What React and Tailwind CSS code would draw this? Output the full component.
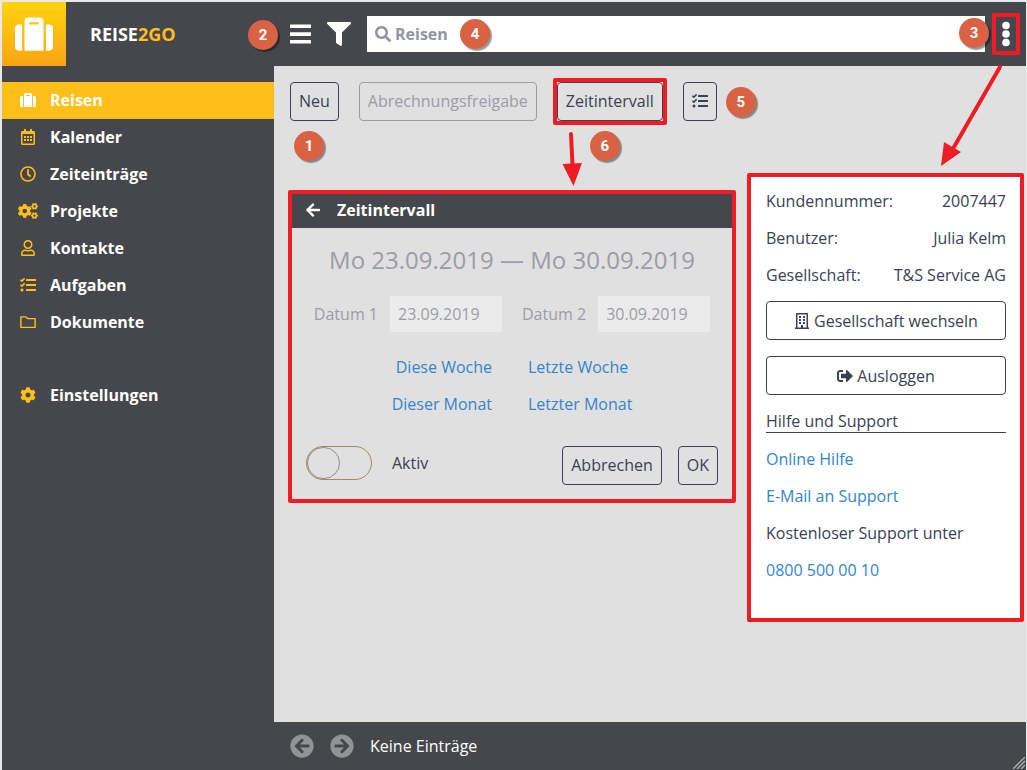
import React, { useState } from 'react';
import {
  FaArrowCircleLeft,
  FaArrowCircleRight,
  FaArrowLeft,
  FaCog,
  FaCogs,
  FaFilter,
  FaRegBuilding,
  FaRegCalendarAlt,
  FaRegClock,
  FaRegUser,
  FaSearch,
  FaSignOutAlt,
  FaSuitcase,
  FaTasks
} from 'react-icons/fa';

const FolderIcon = ({ className }) => (
  <svg viewBox="0 0 16 16" className={className} fill="none" stroke="currentColor" strokeWidth="1.4" strokeLinejoin="round">
    <path d="M.9 2.9h5l1.8 1.7h7.4v8.8H.9z" />
  </svg>
);

const navItems = [
  { label: 'Reisen', icon: FaSuitcase, active: true },
  { label: 'Kalender', icon: FaRegCalendarAlt },
  { label: 'Zeiteinträge', icon: FaRegClock },
  { label: 'Projekte', icon: FaCogs, wide: true },
  { label: 'Kontakte', icon: FaRegUser },
  { label: 'Aufgaben', icon: FaTasks },
  { label: 'Dokumente', icon: FolderIcon }
];

const account = [
  { label: 'Kundennummer:', value: '2007447' },
  { label: 'Benutzer:', value: 'Julia Kelm' },
  { label: 'Gesellschaft:', value: 'T&S Service AG' }
];

const buttonClass = 'h-[39px] px-2 border border-[#3a4252] rounded-[4px] text-[#3a4252] whitespace-nowrap';

const Badge = ({ children, className }) => (
  <span className={`absolute z-20 flex items-center justify-center w-[30px] h-[30px] rounded-full bg-[#d96245] text-white text-[15px] font-bold font-['Roboto',sans-serif] shadow-[2px_2px_1px_rgba(0,0,0,0.4)] ${className}`}>
    {children}
  </span>
);

// Red frame around a control
const Marker = () => (
  <span className="absolute -inset-1 border-4 border-[#ee1c25] rounded-[2px] pointer-events-none" />
);

const NavItem = ({ item }) => {
  const Icon = item.icon;
  return (
    <li>
      <a
        href="#"
        className={`flex items-center h-[37px] pl-4 pb-[2px] gap-3 font-bold text-white ${item.active ? 'bg-[#ffbf1b]' : ''}`}
      >
        <span className={`flex justify-center w-5 ${item.active ? 'text-white' : 'text-[#ffbf1b]'}`}>
          <Icon className={item.wide ? 'w-5 h-4' : 'w-4 h-4'} />
        </span>
        <span>{item.label}</span>
      </a>
    </li>
  );
};

const Header = () => (
  <header className="flex h-16 bg-[#46474c]">
    <div className="flex items-center w-[272px] shrink-0">
      <div className="flex items-center justify-center w-16 h-16 bg-linear-to-b from-[#ffd30d] to-[#f9a414]">
        <FaSuitcase className="w-[38px] h-[38px] text-white" />
      </div>
      <h1 className="pl-6 text-lg font-bold text-white">
        REISE<span className="text-[#ffbf1b]">2GO</span>
      </h1>
    </div>
    <div className="flex flex-1 items-center pl-4 pr-[10px]">
      <div className="relative flex">
        <Badge className="-left-[42px] -top-[2px]">2</Badge>
        <button type="button" aria-label="Menü" className="text-white">
          <svg viewBox="0 0 21 24" className="w-[21px] h-6" fill="currentColor">
            <rect x="0" y="2.500" width="21" height="3.600" rx=".6" />
            <rect x="0" y="10.300" width="21" height="3.600" rx=".6" />
            <rect x="0" y="18" width="21" height="3.600" rx=".6" />
          </svg>
        </button>
      </div>
      <button type="button" aria-label="Filter" className="ml-4 text-white">
        <FaFilter className="w-6 h-6" />
      </button>
      <div className="relative flex-1 ml-4">
        <FaSearch className="absolute left-2 top-[10px] w-4 h-4 text-[#8f96a3]" />
        <input
          type="search"
          aria-label="Suche"
          placeholder="Reisen"
          className="block w-full h-9 pl-7 pr-2 bg-white font-bold text-[#3a4252] placeholder-[#8f96a3] focus:outline-none"
        />
        <Badge className="left-[93px] top-[3px]">4</Badge>
        <Badge className="-right-1 top-[2px]">3</Badge>
      </div>
      <div className="relative ml-[11px]">
        <button type="button" aria-label="Konto" className="flex items-center justify-center w-5 h-[34px] text-white">
          <svg viewBox="0 0 8 26" className="w-2 h-[26px]" fill="currentColor">
            <circle cx="4" cy="4.5" r="3.8" />
            <circle cx="4" cy="13" r="3.8" />
            <circle cx="4" cy="21.5" r="3.8" />
          </svg>
        </button>
        <Marker />
        <svg viewBox="0 0 64 104" className="absolute z-20 -left-14 top-[46px] w-16 h-[104px] pointer-events-none">
          <path d="M60 4 14 84" stroke="#ee1c25" strokeWidth="4" strokeLinecap="round" />
          <path d="M4 79 21 89 1 103z" fill="#ee1c25" />
        </svg>
      </div>
    </div>
  </header>
);

const Sidebar = () => (
  <nav className="w-[272px] shrink-0 pt-4 bg-[#46474c]">
    <ul>
      {navItems.map(item => (
        <NavItem key={item.label} item={item} />
      ))}
    </ul>
    <ul className="mt-9">
      <NavItem item={{ label: 'Einstellungen', icon: FaCog }} />
    </ul>
  </nav>
);

const Toolbar = () => (
  <div className="flex gap-5 pl-4">
    <div className="relative flex">
      <button type="button" className={`${buttonClass} pb-[2px]`}>Neu</button>
      <Badge className="left-1 top-[49px]">1</Badge>
    </div>
    <button type="button" disabled className="h-[39px] px-2 pb-[2px] border border-[#9b9da6] rounded-[4px] text-[#9b9da6] whitespace-nowrap">
      Abrechnungsfreigabe
    </button>
    <div className="relative flex">
      <button type="button" className={`${buttonClass} pb-[2px]`}>Zeitintervall</button>
      <Marker />
      <svg viewBox="0 0 24 58" className="absolute left-1 top-[47px] w-6 h-[58px] pointer-events-none">
        <path d="M10 5 11.500 36" stroke="#ee1c25" strokeWidth="4" strokeLinecap="round" />
        <path d="M1.500 35 21 34 12.500 57z" fill="#ee1c25" />
      </svg>
      <Badge className="left-[33px] top-[49px]">6</Badge>
    </div>
    <div className="relative flex">
      <button type="button" aria-label="Auswahl" className={`${buttonClass} pb-[2px]`}>
        <FaTasks className="w-4 h-4" />
      </button>
      <Badge className="left-[43px] top-[5px]">5</Badge>
    </div>
  </div>
);

const IntervalPanel = () => {
  const [active, setActive] = useState(false);

  return (
    <section className="flex-1 mt-[17px] border-4 border-[#ee1c25] rounded-[2px]">
      <div className="flex items-center h-[34px] pl-[13px] pb-[2px] gap-4 bg-[#46474c] text-white">
        <button type="button" aria-label="Zurück">
          <FaArrowLeft className="w-4 h-4" />
        </button>
        <h2 className="font-bold">Zeitintervall</h2>
      </div>
      <form className="px-[14px] pb-[14px]" onSubmit={(e) => e.preventDefault()}>
        <p className="py-4 text-2xl leading-8 text-center text-[#9b9da6]">Mo 23.09.2019 — Mo 30.09.2019</p>
        <div className="flex justify-center gap-5 mt-1 text-[#9b9da6]">
          <div className="flex items-center gap-3">
            <label htmlFor="datum1">Datum 1</label>
            <input id="datum1" type="text" defaultValue="23.09.2019" className="w-28 h-9 px-2 bg-[#ebebeb]" />
          </div>
          <div className="flex items-center gap-3">
            <label htmlFor="datum2">Datum 2</label>
            <input id="datum2" type="text" defaultValue="30.09.2019" className="w-28 h-9 px-2 bg-[#ebebeb]" />
          </div>
        </div>
        <div className="grid grid-cols-2 gap-x-9 pr-1 mt-[17px] leading-[37px] text-[#3385cc]">
          <a href="#" className="text-right">Diese Woche</a>
          <a href="#">Letzte Woche</a>
          <a href="#" className="text-right">Dieser Monat</a>
          <a href="#">Letzter Monat</a>
        </div>
        <div className="flex items-start justify-between mt-[23px]">
          <label className="flex items-center gap-5 text-[#3a4252] cursor-pointer">
            <input
              type="checkbox"
              checked={active}
              onChange={(e) => setActive(e.target.checked)}
              className="peer sr-only"
            />
            <span className="flex w-[66px] h-[34px] border border-[#a38d55] rounded-full peer-checked:justify-end">
              <span className="w-[33px] h-8 border border-[#8f8f8f] rounded-full" />
            </span>
            <span>Aktiv</span>
          </label>
          <div className="flex gap-4">
            <button type="button" className={`${buttonClass} pb-[2px]`}>Abbrechen</button>
            <button type="submit" className={`${buttonClass} pb-[2px]`}>OK</button>
          </div>
        </div>
      </form>
    </section>
  );
};

const AccountPanel = () => (
  <aside className="w-[277px] shrink-0 pl-[15px] pr-[14px] pt-[6px] pb-[29px] bg-white border-4 border-[#ee1c25] rounded-[2px] text-[#3a4252]">
    <dl className="leading-[37px]">
      {account.map(row => (
        <div key={row.label} className="flex justify-between">
          <dt>{row.label}</dt>
          <dd>{row.value}</dd>
        </div>
      ))}
    </dl>
    <div className="flex flex-col gap-4 mt-[7px]">
      <button type="button" className={`${buttonClass} flex items-center justify-center gap-1`}>
        <FaRegBuilding className="w-4 h-4" />
        <span>Gesellschaft wechseln</span>
      </button>
      <button type="button" className={`${buttonClass} flex items-center justify-center gap-1`}>
        <FaSignOutAlt className="w-4 h-4" />
        <span>Ausloggen</span>
      </button>
    </div>
    <h3 className="mt-[15px] mb-2 leading-[22px] border-b border-[#3a4252]">Hilfe und Support</h3>
    <ul className="leading-[37px]">
      <li><a href="#" className="text-[#3385cc]">Online Hilfe</a></li>
      <li><a href="#" className="text-[#3385cc]">E-Mail an Support</a></li>
      <li>Kostenloser Support unter</li>
      <li><a href="tel:08005000010" className="text-[#3385cc]">0800 500 00 10</a></li>
    </ul>
  </aside>
);

const Footer = () => (
  <footer className="relative flex items-center h-12 pl-4 bg-[#46474c] text-white">
    <button type="button" aria-label="Vorherige Seite" className="text-[#929397]">
      <FaArrowCircleLeft className="w-6 h-6" />
    </button>
    <button type="button" aria-label="Nächste Seite" className="ml-4 text-[#929397]">
      <FaArrowCircleRight className="w-6 h-6" />
    </button>
    <span className="ml-4">Keine Einträge</span>
    <svg viewBox="0 0 12 12" className="absolute right-px bottom-px w-3 h-3" stroke="#b4b4b4" strokeWidth="1.300">
      <path d="M0 12 12 0M4 12 12 4M8 12 12 8" />
    </svg>
  </footer>
);

const App = () => {
  return (
    <div className="flex flex-col min-h-screen pt-[2px] pl-[2px] pr-px bg-[#e8e9ea] text-base font-['Open_Sans',sans-serif]">
      <Header />
      <div className="flex flex-1">
        <Sidebar />
        <div className="flex flex-col flex-1 min-w-0">
          <main className="flex-1 pt-4 bg-[#e0e0e0]">
            <Toolbar />
            <div className="flex items-start gap-[11px] mt-[52px] pl-[14px] pr-[2px]">
              <IntervalPanel />
              <AccountPanel />
            </div>
          </main>
          <Footer />
        </div>
      </div>
    </div>
  );
};

export default App;
